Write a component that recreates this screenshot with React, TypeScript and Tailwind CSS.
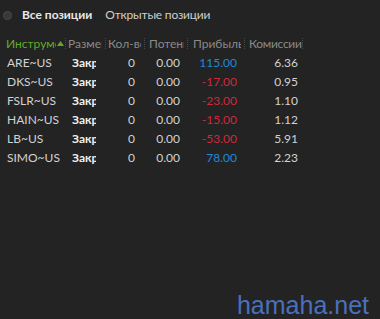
import React from "react";

type Row = {
  name: string;
  qty: string;
  pot: string;
  profit: string;
  up: boolean;
  fee: string;
};

const rows: Row[] = [
  { name: "ARE~US", qty: "0", pot: "0.00", profit: "115.00", up: true, fee: "6.36" },
  { name: "DKS~US", qty: "0", pot: "0.00", profit: "-17.00", up: false, fee: "0.95" },
  { name: "FSLR~US", qty: "0", pot: "0.00", profit: "-23.00", up: false, fee: "1.10" },
  { name: "HAIN~US", qty: "0", pot: "0.00", profit: "-15.00", up: false, fee: "1.12" },
  { name: "LB~US", qty: "0", pot: "0.00", profit: "-53.00", up: false, fee: "5.91" },
  { name: "SIMO~US", qty: "0", pot: "0.00", profit: "78.00", up: true, fee: "2.23" },
];

function Sep() {
  return <div className="h-[11px] w-px shrink-0 border-l border-dotted border-[#4a4a4a]" />;
}

function Head({ w, pad, label }: { w: string; pad: string; label: string }) {
  return (
    <div className={w + " " + pad + " shrink-0"}>
      <div className="overflow-hidden">{label}</div>
    </div>
  );
}

export default function App() {
  return (
    <div
      className="relative h-[319px] w-[380px] overflow-hidden bg-[#232323] text-[12px] text-[#d2d2d2]"
      style={{ fontFamily: 'Lato, "Open Sans", sans-serif' }}
    >
      {/* Tabs */}
      <div className="flex h-[30px] items-center">
        <div className="ml-[3px] h-[9px] w-[9px] rounded-full border border-[#4a4a4a] bg-[#383838]" />
        <div className="ml-[10px] font-bold text-[#e8e8e8]">Все позиции</div>
        <div className="ml-[13px] tracking-[-0.2px] text-[#cfcfcf]">Открытые позиции</div>
      </div>

      {/* Header */}
      <div className="mt-[4px] flex h-[19px] items-center whitespace-nowrap text-[#8a8a8a]">
        <div className="flex w-[65px] shrink-0 items-center pl-[6px]">
          <span className="w-[50px] overflow-hidden text-[#62a82c]">Инструмент</span>
          <svg width="7" height="5" viewBox="0 0 7 5" className="ml-[1px]">
            <path d="M0 5 L3.5 0 L7 5 Z" fill="#62a82c" />
          </svg>
        </div>
        <Sep />
        <Head w="w-[39px]" pad="pl-[2px] pr-[3px]" label="Размер" />
        <Sep />
        <Head w="w-[38px]" pad="pl-[2px] pr-[3px]" label="Кол-во" />
        <Sep />
        <Head w="w-[42px]" pad="pl-[4px] pr-[3px]" label="Потенциал" />
        <Sep />
        <Head w="w-[56px]" pad="pl-[5px] pr-[3px]" label="Прибыль" />
        <Sep />
        <Head w="w-[57px]" pad="pl-[4px] pr-0 tracking-[-0.3px]" label="Комиссии" />
        <Sep />
      </div>

      {/* Rows */}
      <div className="flex flex-col">
        {rows.map((r) => (
          <div key={r.name} className="flex h-[19px] items-center whitespace-nowrap">
            <div className="w-[66px] shrink-0 pl-[7px]">{r.name}</div>
            <div className="w-[40px] shrink-0 pl-[6px] font-bold text-[#f0f0f0]">
              <span className="block w-[24px] overflow-hidden">Закрыта</span>
            </div>
            <div className="w-[39px] shrink-0 pr-[10px] text-right">{r.qty}</div>
            <div className="w-[43px] shrink-0 pr-[8px] text-right">{r.pot}</div>
            <div
              className={
                "w-[57px] shrink-0 pr-[8px] text-right " +
                (r.up ? "text-[#1e8ad6]" : "text-[#d0283c]")
              }
            >
              {r.profit}
            </div>
            <div className="w-[58px] shrink-0 pr-[5px] text-right">{r.fee}</div>
          </div>
        ))}
      </div>

      {/* Watermark */}
      <div
        className="absolute bottom-[1px] right-[11px] text-[25px] leading-none text-[#4a70bd]"
        style={{ fontFamily: '"Liberation Sans", Arial, sans-serif' }}
      >
        hamaha.net
      </div>
    </div>
  );
}
